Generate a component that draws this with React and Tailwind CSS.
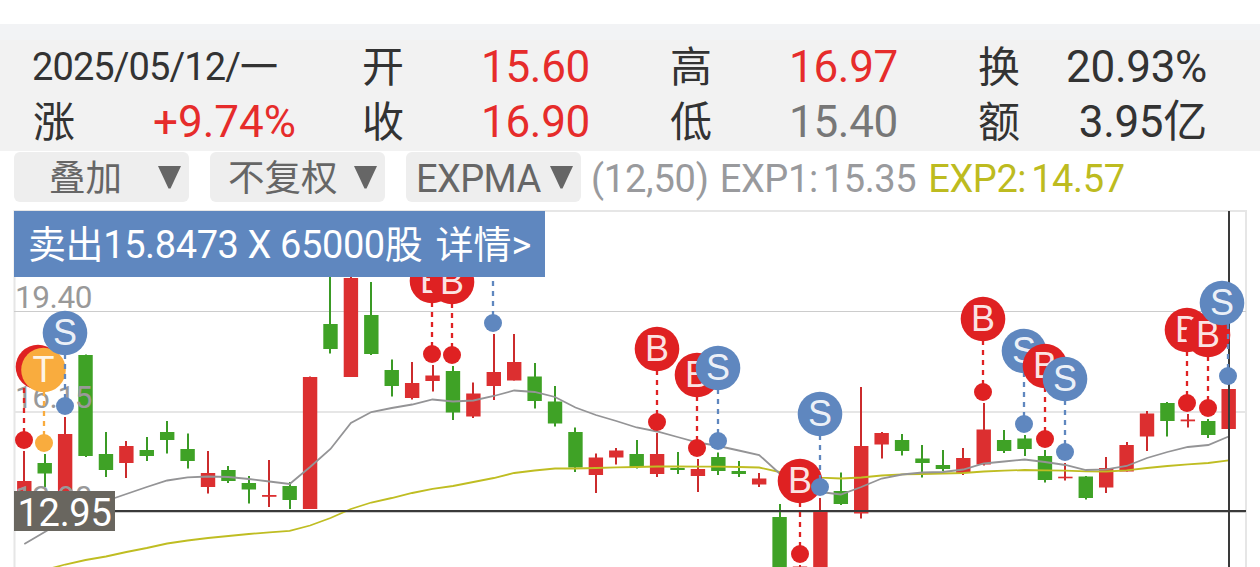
const STEP = 20.413;
const FIRST_X = 24.3;
const xAt = (i) => FIRST_X + i * STEP;

const COLORS = {
  up: "#dc2f30",
  down: "#3fa226",
  B: "#df2122",
  S: "#5f87bf",
  T: "#f9ac3e",
};

const WICKS = { up: "#cb2b2c", down: "#3a9a25" };

const QUOTES = [
  [
    { label: "开", value: "15.60", tone: "text-[#e62c2b]" },
    { label: "高", value: "16.97", tone: "text-[#e62c2b]" },
    { label: "换", value: "20.93%", tone: "text-[#333333]" },
  ],
  [
    { label: "收", value: "16.90", tone: "text-[#e62c2b]" },
    { label: "低", value: "15.40", tone: "text-[#777777]" },
    { label: "额", value: "3.95亿", tone: "text-[#333333]" },
  ],
];

// [direction, high, body top, body bottom, low]
const CANDLES = [
  ["up", 451, 481, 500, 500],
  ["down", 454, 463, 473.5, 487],
  ["up", 417, 434, 505, 505],
  ["down", 354.5, 355, 456, 457],
  ["down", 432, 454, 470, 477],
  ["up", 441, 446, 463, 478],
  ["down", 437, 450, 456, 461],
  ["down", 421, 432, 440, 453.5],
  ["down", 433.5, 449, 461, 468.5],
  ["up", 451, 473, 487, 493.5],
  ["down", 466, 470, 481, 483],
  ["down", 476, 483, 489.5, 503.5],
  ["up", 460, 495, 496.8, 507],
  ["down", 482, 486, 500, 509],
  ["up", 376.5, 377, 509, 509],
  ["down", 270, 324, 349, 353.5],
  ["up", 276, 278, 377, 377],
  ["down", 282, 315, 354, 355],
  ["down", 359.5, 370, 386, 396.5],
  ["up", 362, 383, 398, 399.5],
  ["up", 365, 375.5, 381, 391.5],
  ["down", 366, 371, 412.5, 420],
  ["up", 382.5, 393.5, 416.5, 418],
  ["up", 334, 372, 386, 400],
  ["up", 334, 362, 380.5, 380.5],
  ["down", 363, 376.5, 401, 408.5],
  ["down", 386, 401.5, 423.5, 426.5],
  ["down", 427.5, 432, 467.5, 472],
  ["up", 453.5, 457.5, 475, 493],
  ["up", 448, 450.5, 457.5, 464.5],
  ["down", 440, 454, 467, 468.5],
  ["up", 433, 454, 474, 477],
  ["down", 452, 468, 470, 474],
  ["up", 459, 469, 476, 492],
  ["down", 452.5, 457, 471, 475],
  ["down", 461, 471, 474, 477],
  ["up", 473, 478.5, 484.5, 487],
  ["down", 504, 517, 570, 570],
  ["up", 565, 566.5, 570, 570],
  ["up", 498, 511, 570, 570],
  ["down", 472.5, 491, 504, 505],
  ["up", 387, 446, 513.5, 518.5],
  ["up", 432, 433, 444.5, 458.5],
  ["down", 434, 440, 451, 455.5],
  ["down", 445, 458.5, 463, 477.5],
  ["down", 450, 465, 469, 471],
  ["up", 448, 458, 473, 475],
  ["up", 403, 429.5, 464.5, 465.5],
  ["down", 430, 440, 451, 453],
  ["down", 435, 438.5, 449, 456],
  ["down", 450, 456, 480, 482.5],
  ["up", 463, 476.7, 478.3, 480.5],
  ["down", 476, 476.5, 498, 499.5],
  ["up", 457, 468, 487.5, 493],
  ["up", 442, 445, 471.5, 471.5],
  ["up", 411, 413.5, 436.5, 451],
  ["down", 402, 403, 421, 436.5],
  ["up", 414, 419.5, 421.3, 427.5],
  ["down", 419, 421, 435, 438],
  ["up", 388, 389, 429, 434],
];

const EXP1 = [
  544, 532, 520, 508, 501, 494, 487, 480.5, 477.3, 476.5, 477, 479, 481.5, 484,
  467, 449, 423, 412, 408, 404.5, 399.5, 401.5, 400.5, 396, 390.5, 392, 397,
  407.5, 415, 421, 427.5, 431.5, 437, 442.5, 446, 450.5, 455, 473.5, 489, 492,
  494.5, 487, 478.5, 474.5, 472.5, 472, 469.5, 463.5, 461.5, 459.5, 462, 465,
  470, 469.3, 466, 458, 452, 447, 445, 436.5,
];

const EXP2 = [
  576, 570, 564.5, 560, 556.5, 552, 548, 543.5, 540.5, 538, 536, 534, 532.3,
  530.8, 525.5, 518, 509, 502.5, 498, 493, 488.8, 486, 482, 478, 473, 470.5,
  468.5, 468.5, 468, 467.3, 467, 466.5, 466.5, 466.7, 466.7, 467, 467.5, 472,
  475, 477.7, 478.5, 477.5, 475.5, 474.3, 474, 473.5, 473, 471.5, 470.7, 470,
  470.3, 470.7, 471.3, 471.5, 470.3, 468, 466, 464.3, 463, 460.3,
];

// trade badges (x, y) with the dot they hang from (px, py), in paint order
const TRADES = [
  { x: 38, y: 367, px: 24, py: 440, type: "B", hidden: true },
  { x: 43.5, y: 370, px: 44, py: 443, type: "T" },
  { x: 65, y: 333, px: 65, py: 406, type: "S" },
  { x: 432, y: 281, px: 432, py: 354, type: "B" },
  { x: 452, y: 282, px: 452, py: 355, type: "B" },
  { x: 493, y: 250, px: 493, py: 323, type: "S", hidden: true },
  { x: 657, y: 349, px: 657, py: 422, type: "B" },
  { x: 697, y: 375, px: 697, py: 448, type: "B" },
  { x: 718, y: 368, px: 718, py: 441, type: "S" },
  { x: 800, y: 481, px: 800, py: 554, type: "B" },
  { x: 820, y: 414, px: 820, py: 487, type: "S" },
  { x: 983, y: 319, px: 983, py: 392, type: "B" },
  { x: 1024, y: 351, px: 1024, py: 424, type: "S" },
  { x: 1045, y: 366, px: 1045, py: 439, type: "B" },
  { x: 1065, y: 379, px: 1065, py: 452, type: "S" },
  { x: 1187, y: 330, px: 1187, py: 403, type: "B" },
  { x: 1208, y: 335, px: 1208, py: 408, type: "B" },
  { x: 1222, y: 303, px: 1228, py: 376, type: "S" },
];

const toPoints = (values) => values.map((y, i) => `${xAt(i)},${y}`).join(" ");

function Header() {
  return (
    <div className="mt-6 h-[127px] bg-[#f2f2f2] border-t-[16px] border-[#f2f3f5] text-[#333333]">
      <div className="pl-[33px] grid grid-cols-[329px_308px_308px_229px] text-[42px] leading-[55px]">
        <div className="-ml-px text-[38px] tracking-[-0.9px] whitespace-nowrap">2025/05/12/一</div>
        {QUOTES[0].map((q) => (
          <Quote key={q.label} {...q} />
        ))}
        <div className="flex justify-between pr-[66px]">
          <span>涨</span>
          <span className="text-[44px] text-[#e62c2b]">+9.74%</span>
        </div>
        {QUOTES[1].map((q) => (
          <Quote key={q.label} {...q} />
        ))}
      </div>
    </div>
  );
}

function Quote({ label, value, tone }) {
  return (
    <div className="flex justify-between pr-[80px] last:pr-0 nth-4:pr-0">
      <span>{label}</span>
      <span className={`text-[44px] tracking-[-0.3px] ${tone}`}>{value}</span>
    </div>
  );
}

function Dropdown({ children, className }) {
  return (
    <button
      className={`flex items-center justify-between w-[175px] h-[50px] pr-2 rounded-md bg-[#eeeeee] text-[#666666] ${className}`}
    >
      <span className="pt-1">{children}</span>
      <svg width="23" height="23" viewBox="0 0 23 23" fill="#666666">
        <path d="M0 0H23L12.5 22.5H10.5Z" />
      </svg>
    </button>
  );
}

function Toolbar() {
  return (
    <div className="flex items-center h-[52px] pl-3.5 text-[38px] leading-[46px] whitespace-nowrap">
      <Dropdown className="pl-[35px] mr-[21px] text-[36.5px]">叠加</Dropdown>
      <Dropdown className="pl-[18px] mr-[21px] text-[36.5px]">不复权</Dropdown>
      <Dropdown className="pl-2.5 mr-2.5 tracking-[-0.6px]">EXPMA</Dropdown>
      <span className="pt-1 mr-[11px] text-[#999a9d] tracking-[-0.2px]">(12,50)</span>
      <span className="pt-1 mr-3 text-[#999a9d] tracking-[-0.4px] [word-spacing:-4px]">EXP1: 15.35</span>
      <span className="pt-1 text-[#bdbb20] tracking-[-0.4px] [word-spacing:-4px]">EXP2: 14.57</span>
    </div>
  );
}

function Candle({ index, data }) {
  const [dir, high, top, bottom, low] = data;
  const x = xAt(index);
  return (
    <g>
      <rect x={Math.round(x) - 1} y={high} width="2" height={low - high} fill={WICKS[dir]} />
      <rect x={x - 7.2} y={top} width="14.4" height={bottom - top} fill={COLORS[dir]} />
    </g>
  );
}

function Trade({ type, x, y, px, py, hidden }) {
  const color = COLORS[type];
  return (
    <g>
      <line x1={px} y1={y + 20} x2={px} y2={py} stroke={color} strokeWidth="2.3" strokeDasharray="5 5" strokeDashoffset="-1" />
      <circle cx={px} cy={py} r="9" fill={color} />
      <circle cx={x} cy={y} r="22.3" fill={color} />
      {!hidden && (
        <text x={x} y={y + 12.3} textAnchor="middle" fontSize="36" fill="#fff" fillOpacity="0.9" className="font-['Liberation_Sans',sans-serif]">
          {type}
        </text>
      )}
    </g>
  );
}

function Chart() {
  return (
    <svg className="block" width="1260" height="364" viewBox="0 203 1260 364">
      {/* Frame and grid */}
      <g fill="none" stroke="#e6e6e6" strokeWidth="2">
        <path d="M14.5 570V211H1246V570" />
        <path d="M14 412H1246" />
        <path d="M14 311.5H1246M14 512.5H1246" stroke="#cccccc" strokeWidth="1" />
      </g>

      {CANDLES.map((c, i) => (
        <Candle key={i} index={i} data={c} />
      ))}

      {/* Price scale */}
      <g fontSize="31.5" fill="#999999" letterSpacing="-0.4">
        <text x="15" y="308">19.40</text>
        <text x="15" y="408">16.15</text>
        <text x="15" y="508">12.90</text>
      </g>

      {/* EXPMA lines */}
      <polyline points={toPoints(EXP2)} fill="none" stroke="#bfbd22" strokeWidth="1.8" />
      <polyline points={toPoints(EXP1)} fill="none" stroke="#949496" strokeWidth="1.8" />

      {/* Crosshair */}
      <path d="M14 511H1246M1229 211V567" stroke="#3a3a3a" strokeWidth="2" />

      {TRADES.map((t) => (
        <Trade key={`${t.type}${t.x}`} {...t} />
      ))}
    </svg>
  );
}

export default function App() {
  return (
    <div className="w-[1260px] h-[567px] overflow-hidden bg-white font-[Roboto,'Noto_Sans_CJK_SC',sans-serif]">
      <Header />
      <Toolbar />
      <div className="relative">
        <Chart />
        <div className="absolute left-3.5 top-2 flex w-[531px] h-[66px] pl-3.5 bg-[#5f87bf] text-white text-[38px] leading-[68px] whitespace-nowrap">
          <span className="tracking-[-0.4px]">卖出15.8473 X 65000股</span>
          <span className="ml-[13px]">详情&gt;</span>
        </div>
        <div className="absolute left-3.5 top-[288px] w-[101px] h-10 bg-[#69665f] text-white text-center text-[38px] leading-[44px] tracking-[-0.3px]">
          12.95
        </div>
      </div>
    </div>
  );
}
